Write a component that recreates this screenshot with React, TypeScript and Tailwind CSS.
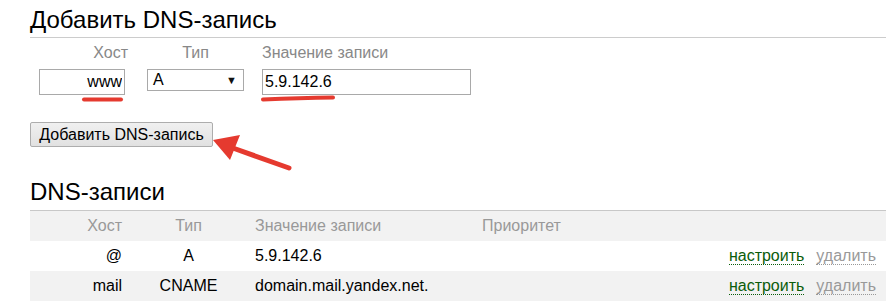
const records = [
  { host: '@', type: 'A', value: '5.9.142.6', priority: '', bg: 'bg-white' },
  { host: 'mail', type: 'CNAME', value: 'domain.mail.yandex.net.', priority: '', bg: 'bg-[#f2f2f2]' },
]

const App = () => {
  return (
    <div className="relative w-[893px] h-[301px] overflow-hidden bg-white text-black font-['Liberation_Sans',Arial,sans-serif]">
      <div className="ml-[30px] w-[856px] pt-[5px]">
        {/* Add record form */}
        <h1 className="text-[24px] leading-[30px] pb-[2px] border-b border-[#cccccc]">Добавить DNS-запись</h1>

        <div className="flex mt-[6px]">
          <div className="ml-[9px] w-[89px] flex flex-col">
            <div className="text-right text-[16px] leading-[18px] text-[#888888]">Хост</div>
            <input
              readOnly
              value="www"
              className="mt-[7px] w-[86px] h-[26px] border border-[#a9a9a9] px-[2px] text-right text-[16px] outline-none"
            />
          </div>
          <div className="ml-[19px] w-[97px] flex flex-col">
            <div className="text-center text-[16px] leading-[18px] text-[#888888]">Тип</div>
            <div className="mt-[7px] h-[22px] border border-[#a9a9a9] flex items-center justify-between pl-[5px] pr-[6px] text-[16px]">
              <span>A</span>
              <span className="text-[11px] text-[#111111]">▼</span>
            </div>
          </div>
          <div className="ml-[18px] w-[209px] flex flex-col">
            <div className="text-[16px] leading-[18px] text-[#888888]">Значение записи</div>
            <input
              readOnly
              value="5.9.142.6"
              className="mt-[7px] w-[209px] h-[26px] border border-[#a9a9a9] px-[2px] text-[16px] outline-none"
            />
          </div>
        </div>

        <button className="mt-[27px] h-[25px] w-[183px] border border-[#adadad] rounded-[2px] bg-gradient-to-b from-[#f0f0f0] to-[#e1e1e1] text-[16px] leading-[22px]">
          Добавить DNS-запись
        </button>

        {/* Records list */}
        <h2 className="mt-[30px] text-[24px] leading-[30px] pb-[3px]">DNS-записи</h2>
        <div className="border-t border-[#c8c8c8] text-[16px]">
          <div className="grid grid-cols-[102px_113px_227px_1fr_auto] h-[30px] items-center bg-[#f2f2f2] text-[#999999]">
            <div className="text-right pr-[10px]">Хост</div>
            <div className="text-center">Тип</div>
            <div className="pl-[10px]">Значение записи</div>
            <div className="pl-[10px]">Приоритет</div>
            <div />
          </div>
          {records.map((r) => (
            <div key={r.host} className={`grid grid-cols-[102px_113px_227px_1fr_auto] h-[30px] items-center ${r.bg}`}>
              <div className="text-right pr-[10px]">{r.host}</div>
              <div className="text-center">{r.type}</div>
              <div className="pl-[10px] whitespace-nowrap">{r.value}</div>
              <div className="pl-[10px]">{r.priority}</div>
              <div className="flex gap-[12px] pr-[10px]">
                <span className="text-[#0a5c0a] border-b border-dotted border-[#0a5c0a] leading-[17px]">настроить</span>
                <span className="text-[#999999] border-b border-dotted border-[#999999] leading-[17px]">удалить</span>
              </div>
            </div>
          ))}
        </div>
      </div>

      {/* Red annotations drawn over the screenshot */}
      <svg className="absolute inset-0 pointer-events-none" width="893" height="301">
        <path d="M84 99.5 L121 99.5" stroke="#e53a2f" strokeWidth="4" strokeLinecap="round" fill="none" />
        <path d="M263 99.5 Q300 98 333 97.5" stroke="#e53a2f" strokeWidth="4" strokeLinecap="round" fill="none" />
        <path d="M289 168 L230 147" stroke="#e53a2f" strokeWidth="5" strokeLinecap="round" fill="none" />
        <polygon points="213,140 240,135 230,160" fill="#e53a2f" />
      </svg>
    </div>
  )
}

export default App
